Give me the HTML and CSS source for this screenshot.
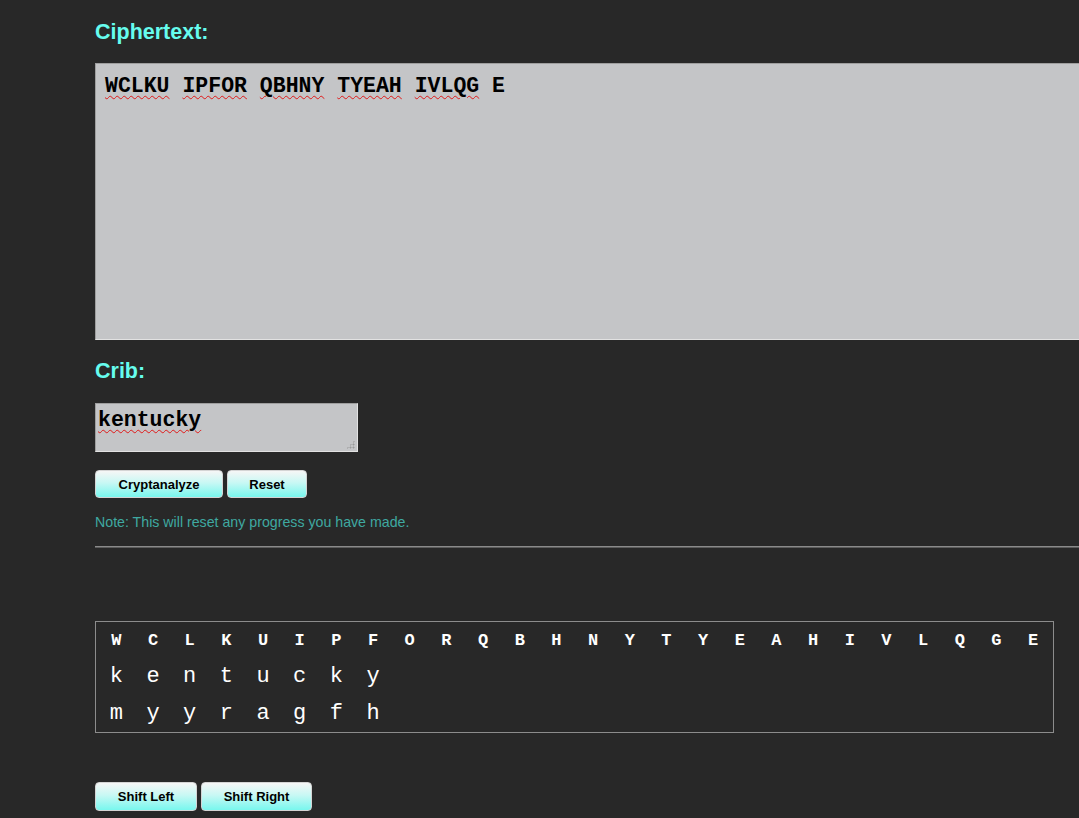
FILE: index.html
```html
<!DOCTYPE html>
<html lang="en">
<head>
<meta charset="utf-8">
<title>Cryptanalysis</title>
<link rel="stylesheet" href="styles.css">
</head>
<body>
<main class="page">
  <h2 class="label">Ciphertext:</h2>
  <div class="textbox cipher" role="textbox"><span class="sp">WCLKU</span> <span class="sp">IPFOR</span> <span class="sp">QBHNY</span> <span class="sp">TYEAH</span> <span class="sp">IVLQG</span> E</div>

  <h2 class="label crib-label">Crib:</h2>
  <div class="textbox crib" role="textbox"><span class="sp">kentucky</span></div>

  <div class="btn-row">
    <button class="btn btn-crypt">Cryptanalyze</button>
    <button class="btn btn-reset">Reset</button>
  </div>
  <p class="note">Note: This will reset any progress you have made.</p>
  <hr class="rule">

  <div class="grid">
    <div class="row head">
      <span>W</span><span>C</span><span>L</span><span>K</span><span>U</span><span>I</span><span>P</span><span>F</span><span>O</span><span>R</span><span>Q</span><span>B</span><span>H</span><span>N</span><span>Y</span><span>T</span><span>Y</span><span>E</span><span>A</span><span>H</span><span>I</span><span>V</span><span>L</span><span>Q</span><span>G</span><span>E</span>
    </div>
    <div class="row">
      <span>k</span><span>e</span><span>n</span><span>t</span><span>u</span><span>c</span><span>k</span><span>y</span>
    </div>
    <div class="row">
      <span>m</span><span>y</span><span>y</span><span>r</span><span>a</span><span>g</span><span>f</span><span>h</span>
    </div>
  </div>

  <div class="btn-row shift-row">
    <button class="btn btn-left">Shift Left</button>
    <button class="btn btn-right">Shift Right</button>
  </div>
</main>
</body>
</html>
```
FILE: styles.css
```css
html, body {
  margin: 0;
  padding: 0;
  background: #282828;
  overflow: hidden;
}
body {
  width: 1079px;
  height: 818px;
  font-family: "Liberation Sans", Arial, sans-serif;
}
.page {
  padding-left: 95px;
  padding-top: 20px;
  display: flex;
  flex-direction: column;
  align-items: flex-start;
}
.label {
  margin: 0;
  font-size: 21.5px;
  line-height: 24px;
  font-weight: bold;
  color: #66fcee;
}
.crib-label {
  margin-top: 19px;
}
.textbox {
  box-sizing: border-box;
  background: #c4c5c7;
  border: 1px solid #9e9e9e;
  border-right-color: #e2e2e2;
  border-bottom-color: #e2e2e2;
  font-family: "Liberation Mono", "Courier New", monospace;
  font-weight: bold;
  font-size: 21.5px;
  color: #000;
  white-space: pre;
  position: relative;
}
.cipher {
  margin-top: 19px;
  width: 1000px;
  height: 277px;
  padding: 10px 9px;
  line-height: 24px;
}
.crib {
  margin-top: 20px;
  width: 263px;
  height: 49px;
  padding: 4px 2px;
  line-height: 24px;
}
.crib::after {
  content: "";
  position: absolute;
  right: 2px;
  bottom: 2px;
  width: 9px;
  height: 9px;
  background:
    radial-gradient(circle, #9a9a9a 0.9px, transparent 1.1px) 0 0 / 3px 3px;
  clip-path: polygon(100% 0, 100% 100%, 0 100%);
}
.sp {
  text-decoration: underline wavy #e01818;
  text-decoration-thickness: 1px;
  text-underline-offset: 3px;
}
.btn-row {
  margin-top: 18px;
  display: flex;
  gap: 4px;
}
.btn {
  box-sizing: border-box;
  height: 28px;
  border: 1px solid #d4d4d4;
  border-radius: 4px;
  background: linear-gradient(to bottom, #f6f6f6 0%, #c8f8f4 45%, #78f7ee 100%);
  font-family: "Liberation Sans", Arial, sans-serif;
  font-weight: bold;
  font-size: 13px;
  color: #000;
  padding: 0;
}
.btn-crypt { width: 128px; }
.btn-reset { width: 80px; }
.btn-left { width: 102px; }
.btn-right { width: 111px; }
.shift-row {
  margin-top: 49px;
}
.shift-row .btn {
  height: 29px;
}
.note {
  margin: 16px 0 0;
  font-size: 14.2px;
  line-height: 16px;
  color: #3fa9a1;
}
.rule {
  margin: 16px 0 0;
  width: 1000px;
  height: 0;
  border: 0;
  border-top: 1px solid #8a8a8a;
  border-bottom: 1px solid #5c5c5c;
}
.grid {
  margin-top: 73px;
  box-sizing: border-box;
  width: 959px;
  height: 112px;
  border: 1px solid #8c8c8c;
  padding: 0 2px;
  font-family: "Liberation Mono", "Courier New", monospace;
  color: #fff;
}
.row {
  display: grid;
  grid-template-columns: repeat(26, 36.68px);
  height: 36.5px;
  align-items: center;
  font-size: 22px;
}
.row span {
  text-align: center;
}
.row.head {
  font-weight: bold;
  font-size: 17px;
}
```
